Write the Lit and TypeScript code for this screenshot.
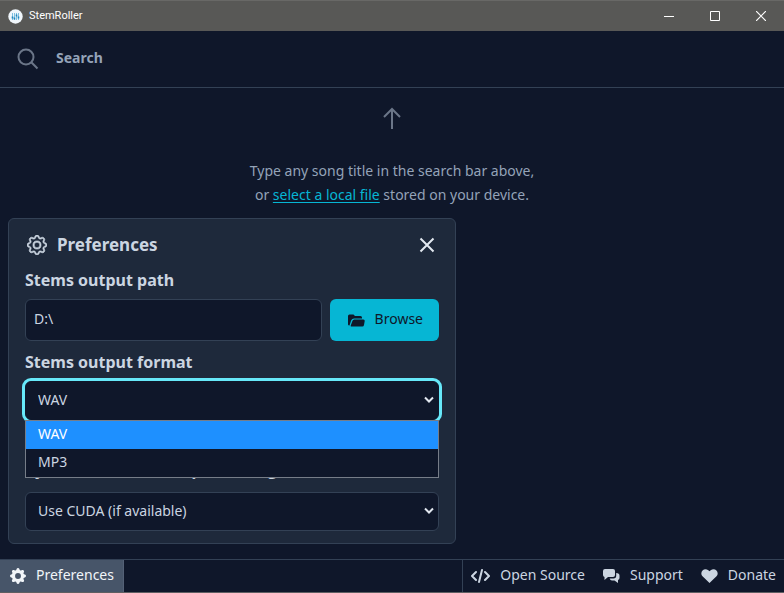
import { LitElement, html, css } from "lit";
import { customElement } from "lit/decorators.js";

const gearOutline = html`<svg viewBox="0 0 16 16" width="20" height="20" fill="currentColor" stroke="currentColor" stroke-width="0.5" aria-hidden="true"><path d="M8 4.754a3.246 3.246 0 1 0 0 6.492 3.246 3.246 0 0 0 0-6.492zM5.754 8a2.246 2.246 0 1 1 4.492 0 2.246 2.246 0 0 1-4.492 0z"/><path d="M9.796 1.343c-.527-1.79-3.065-1.79-3.592 0l-.094.319a.873.873 0 0 1-1.255.52l-.292-.16c-1.64-.892-3.433.902-2.54 2.541l.159.292a.873.873 0 0 1-.52 1.255l-.319.094c-1.79.527-1.79 3.065 0 3.592l.319.094a.873.873 0 0 1 .52 1.255l-.16.292c-.892 1.64.901 3.434 2.541 2.54l.292-.159a.873.873 0 0 1 1.255.52l.094.319c.527 1.79 3.065 1.79 3.592 0l.094-.319a.873.873 0 0 1 1.255-.52l.292.16c1.64.893 3.434-.902 2.54-2.541l-.159-.292a.873.873 0 0 1 .52-1.255l.319-.094c1.79-.527 1.79-3.065 0-3.592l-.319-.094a.873.873 0 0 1-.52-1.255l.16-.292c.893-1.64-.902-3.433-2.541-2.54l-.292.159a.873.873 0 0 1-1.255-.52l-.094-.319zm-2.633.283c.246-.835 1.428-.835 1.674 0l.094.319a1.873 1.873 0 0 0 2.693 1.115l.291-.16c.764-.415 1.6.42 1.184 1.185l-.159.292a1.873 1.873 0 0 0 1.116 2.692l.318.094c.835.246.835 1.428 0 1.674l-.319.094a1.873 1.873 0 0 0-1.115 2.693l.16.291c.415.764-.42 1.6-1.185 1.184l-.291-.159a1.873 1.873 0 0 0-2.693 1.116l-.094.318c-.246.835-1.428.835-1.674 0l-.094-.319a1.873 1.873 0 0 0-2.692-1.115l-.292.16c-.764.415-1.6-.42-1.184-1.185l.159-.291A1.873 1.873 0 0 0 1.945 8.93l-.319-.094c-.835-.246-.835-1.428 0-1.674l.319-.094A1.873 1.873 0 0 0 3.06 4.377l-.16-.292c-.415-.764.42-1.6 1.185-1.184l.292.159a1.873 1.873 0 0 0 2.692-1.115l.094-.319z"/></svg>`;

const gearSolid = html`<svg viewBox="0 0 16 16" width="16" height="16" fill="currentColor" aria-hidden="true"><path d="M9.405 1.05c-.413-1.4-2.397-1.4-2.81 0l-.1.34a1.464 1.464 0 0 1-2.105.872l-.31-.17c-1.283-.698-2.686.705-1.987 1.987l.169.311c.446.82.023 1.841-.872 2.105l-.34.1c-1.4.413-1.4 2.397 0 2.81l.34.1a1.464 1.464 0 0 1 .872 2.105l-.17.31c-.698 1.283.705 2.686 1.987 1.987l.311-.169a1.464 1.464 0 0 1 2.105.872l.1.34c.413 1.4 2.397 1.4 2.81 0l.1-.34a1.464 1.464 0 0 1 2.105-.872l.31.17c1.283.698 2.686-.705 1.987-1.987l-.169-.311a1.464 1.464 0 0 1 .872-2.105l.34-.1c1.4-.413 1.4-2.397 0-2.81l-.34-.1a1.464 1.464 0 0 1-.872-2.105l.17-.31c.698-1.283-.705-2.686-1.987-1.987l-.311.169a1.464 1.464 0 0 1-2.105-.872l-.1-.34zM8 10.93a2.929 2.929 0 1 1 0-5.86 2.929 2.929 0 0 1 0 5.858z"/></svg>`;

@customElement("app-root")
export class AppRoot extends LitElement {
  static styles = css`
    :host {
      display: flex;
      flex-direction: column;
      position: relative;
      box-sizing: border-box;
      min-height: 100vh;
      background: #0f172a;
      color: #cbd5e1;
      font: 14px/24px "Noto Sans", sans-serif;
      border-bottom: 1px solid #5f5f62;
    }
    *, *::before, *::after { box-sizing: border-box; }
    button, input, select { font: inherit; color: inherit; margin: 0; }
    button { border: 0; padding: 0; background: none; cursor: pointer; }
    svg { display: block; flex: none; }
    .titlebar {
      display: flex;
      align-items: center;
      height: 31px;
      padding-left: 8px;
      background: #585856;
      border-top: 1px solid #686866;
      color: #fff;
      font: 11px/16px Roboto, sans-serif;
    }
    .name { margin-left: 6px; flex: 1; }
    .win { width: 46px; height: 30px; display: grid; place-items: center; }
    .search {
      display: flex;
      align-items: center;
      height: 57px;
      padding: 0 17px;
      gap: 17px;
      border-bottom: 1px solid #334155;
      color: #6b7688;
    }
    .search input {
      flex: 1;
      min-width: 0;
      border: 0;
      padding: 0 0 2px;
      outline: 0;
      background: none;
      font-weight: 700;
    }
    .search input::placeholder { color: #94a3b8; opacity: 1; }
    .body { flex: 1; }
    .hint {
      display: flex;
      flex-direction: column;
      align-items: center;
      padding-top: 18px;
      gap: 29px;
      text-align: center;
      color: #94a3b8;
    }
    .hint p { margin: 0; }
    .hint svg { color: #6b7688; }
    .hint a { color: #06b6d4; text-decoration: underline; text-underline-offset: 2px; }
    .panel {
      position: absolute;
      left: 8px;
      bottom: 48px;
      width: 448px;
      max-width: calc(100% - 16px);
      padding: 8px 16px 12px;
      border: 1px solid #334155;
      border-radius: 6px;
      background: #1e293b;
    }
    .head { display: flex; align-items: center; gap: 10px; height: 36px; padding: 0 4px 0 2px; }
    .head h2 { margin: 0; flex: 1; font-size: 17px; line-height: 24px; }
    .label { display: block; font-weight: 700; font-size: 16px; line-height: 24px; margin: 5px 0 7px; }
    .label.spaced { margin: 37px 0 11px; }
    .row { display: flex; gap: 8px; margin-bottom: 9px; }
    .path {
      flex: 1;
      min-width: 0;
      height: 42px;
      padding: 0 8px 4px;
      border: 1px solid #334155;
      border-radius: 6px;
      background: #0f172a;
    }
    .browse {
      display: flex;
      align-items: center;
      gap: 10px;
      height: 42px;
      padding: 0 16px 0 18px;
      border-radius: 6px;
      background: #06b6d4;
      color: #0f172a;
    }
    .browse span, .foot span { padding-bottom: 2px; }
    .field { position: relative; }
    .field select {
      display: block;
      appearance: none;
      width: 100%;
      height: 39px;
      padding: 0 32px 2px 12px;
      border: 1px solid #334155;
      border-radius: 6px;
      background: #0f172a;
      outline: 0;
    }
    .field select.open { box-shadow: 0 0 0 3px #67e8f9; border-color: #0f172a; }
    .chev { position: absolute; right: 5px; top: 15px; pointer-events: none; }
    .menu {
      position: absolute;
      z-index: 1;
      left: 0;
      right: 0;
      top: 39px;
      margin: 0;
      padding: 0;
      list-style: none;
      border: 1px solid #767d88;
      background: #0f172a;
    }
    .menu li { padding: 0 12px 2px; line-height: 26px; }
    .menu .on { background: #1e90ff; color: #fff; }
    .foot {
      display: flex;
      height: 33px;
      border-top: 1px solid #334155;
    }
    .tab { display: flex; align-items: center; gap: 10px; padding: 0 9px 0 10px; background: #475569; border-right: 1px solid #546176; color: #f1f5f9; }
    .links { display: flex; align-items: center; gap: 18px; margin-left: auto; padding: 0 8px; border-left: 1px solid #334155; }
    .links a { display: flex; align-items: center; gap: 10px; color: inherit; text-decoration: none; }
  `;

  private chevron() {
    return html`<svg class="chev" width="10" height="8" viewBox="0 0 10 8" fill="none" stroke="#e2e8f0" stroke-width="2" aria-hidden="true"><path d="M1 1.5L5 5.5L9 1.5"/></svg>`;
  }

  render() {
    return html`
      <header class="titlebar">
        <svg width="15" height="15" viewBox="0 0 15 15" aria-hidden="true">
          <circle cx="7.5" cy="7.5" r="7.2" fill="#f0f6fb"/>
          <path d="M4.5 4v7M6.5 4v7M8.5 4v7M10.5 4v7" stroke="#7dbfe0" stroke-width="1"/>
          <path d="M3.7 8.5h1.6M5.7 9.5h1.6M7.7 6.5h1.6M9.7 8.5h1.6" stroke="#1f86bd" stroke-width="2"/>
        </svg>
        <span class="name">StemRoller</span>
        <button class="win" aria-label="Minimize"><svg width="10" height="10" stroke="#fff"><path d="M0 5.5h10"/></svg></button>
        <button class="win" aria-label="Maximize"><svg width="10" height="10" fill="none" stroke="#fff"><path d="M.5.5h9v9h-9z"/></svg></button>
        <button class="win" aria-label="Close"><svg width="10" height="10" stroke="#fff" stroke-width="1.2"><path d="M0 0l10 10M10 0L0 10"/></svg></button>
      </header>
      <div class="search">
        <svg width="22" height="22" viewBox="0 0 22 22" fill="none" stroke="currentColor" stroke-width="2" aria-hidden="true"><circle cx="9" cy="9" r="7.5"/><path d="M14.3 14.3L20.5 20.5"/></svg>
        <input type="text" placeholder="Search" aria-label="Search" />
      </div>
      <main class="body">
        <div class="hint">
          <svg width="24" height="24" viewBox="0 0 24 24" fill="none" stroke="currentColor" stroke-width="2" aria-hidden="true"><path d="M12 23V3M4 11l8-8 8 8"/></svg>
          <p>Type any song title in the search bar above,<br />or <a href="#">select a local file</a> stored on your device.</p>
        </div>
      </main>
      <section class="panel" aria-label="Preferences">
        <div class="head">
          ${gearOutline}
          <h2>Preferences</h2>
          <button aria-label="Close preferences"><svg width="16" height="16" fill="none" stroke="#e2e8f0" stroke-width="2"><path d="M1.5 1.5l13 13M14.5 1.5L1.5 14.5"/></svg></button>
        </div>
        <label class="label" for="path">Stems output path</label>
        <div class="row">
          <input class="path" id="path" type="text" value="D:\\" />
          <button class="browse">
            <svg width="17" height="14" viewBox="0 0 17 14" fill="currentColor" aria-hidden="true"><path d="M0 11.5V3Q0 1.5 1.5 1.5H5.5l1.5 1.5h5.5Q14 3 14 4.5V5.5H6Q4 5.5 3.2 7.3L1.5 12.5Q0 12.5 0 11.5z"/><path d="M2.6 13L4.4 8Q4.9 6.5 6.3 6.5H15.3Q17 6.5 16.7 8L16 12Q15.7 13.5 14.3 13.5H3Z"/></svg>
            <span>Browse</span>
          </button>
        </div>
        <label class="label" for="format">Stems output format</label>
        <div class="field">
          <select class="open" id="format"><option selected>WAV</option><option>MP3</option></select>
          ${this.chevron()}
          <ul class="menu"><li class="on">WAV</li><li>MP3</li></ul>
        </div>
        <label class="label spaced" for="backend">PyTorch backend for processing</label>
        <div class="field">
          <select id="backend"><option>Use CUDA (if available)</option></select>
          ${this.chevron()}
        </div>
      </section>
      <footer class="foot">
        <button class="tab">${gearSolid}<span>Preferences</span></button>
        <nav class="links">
          <a href="#"><svg width="19" height="16" viewBox="0 0 19 16" fill="none" stroke="currentColor" stroke-width="2" stroke-linecap="round" stroke-linejoin="round" aria-hidden="true"><path d="M5 4L1 8l4 4M14 4l4 4-4 4M11 2L8 14"/></svg><span>Open Source</span></a>
          <a href="#"><svg width="17" height="16" viewBox="0 0 17 16" fill="currentColor" aria-hidden="true"><path d="M2 1h8q2 0 2 2v4q0 2-2 2H5l-3.5 3V9Q0 8.5 0 7V3q0-2 2-2z"/><path d="M13.2 5Q16.5 5 16.5 7.5v2.5q0 1.6-1.5 2v3L11.5 12.5H9q-1.8 0-2.4-2H10.5q2.7 0 2.7-2.7z"/></svg><span>Support</span></a>
          <a href="#"><svg width="17" height="16" viewBox="0 0 17 16" fill="currentColor" aria-hidden="true"><path d="M8.5 15L1.5 8.3C-2 4.5 3-1 7.3 2.2L8.5 3.3l1.2-1.1C14-1 19 4.5 15.5 8.3z"/></svg><span>Donate</span></a>
        </nav>
      </footer>
    `;
  }
}
